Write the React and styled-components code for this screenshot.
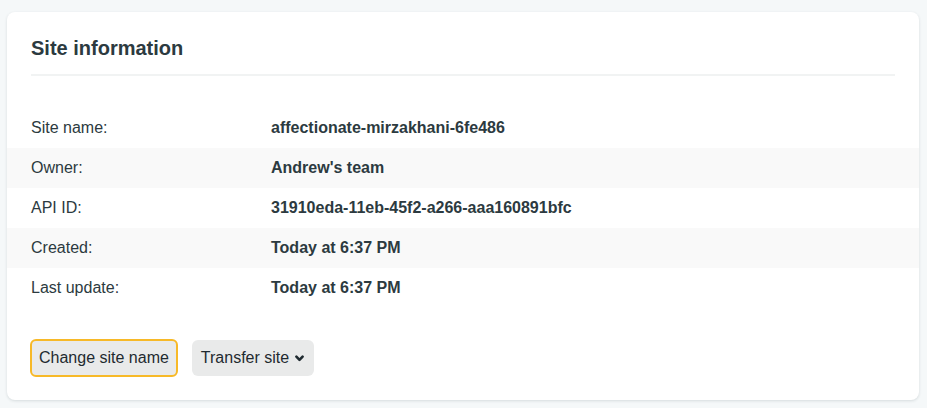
import React from 'react'
import styled, { createGlobalStyle } from 'styled-components'

const GlobalStyle = createGlobalStyle`
    body {
        margin: 0;
        padding: 12px 8px 8px 7px;
        background: #f5f8f9;
        font-family: "Liberation Sans", Arial, sans-serif;
        color: #2c3a40;
    }
`

const rows = [
    { label: 'Site name:', value: 'affectionate-mirzakhani-6fe486' },
    { label: 'Owner:', value: "Andrew's team" },
    { label: 'API ID:', value: '31910eda-11eb-45f2-a266-aaa160891bfc' },
    { label: 'Created:', value: 'Today at 6:37 PM' },
    { label: 'Last update:', value: 'Today at 6:37 PM' },
]

const App = () => {
    return (
        <>
            <GlobalStyle />
            <Card>
                <Header>
                    <Title>Site information</Title>
                </Header>
                <InfoList>
                    {rows.map((row, i) => (
                        <Row key={row.label} striped={i % 2 === 1}>
                            <Label>{row.label}</Label>
                            <Value>{row.value}</Value>
                        </Row>
                    ))}
                </InfoList>
                <Actions>
                    <Button focused>Change site name</Button>
                    <Button>
                        Transfer site
                        <svg width="9" height="7" viewBox="0 0 9 7">
                            <path d="M1.4 1.6 L4.5 4.8 L7.6 1.6" fill="none" stroke="#1f2a30" strokeWidth="2.6" strokeLinecap="round" strokeLinejoin="round" />
                        </svg>
                    </Button>
                </Actions>
            </Card>
        </>
    )
}

export default App

const Card = styled.div`
    background: #ffffff;
    border-radius: 8px;
    box-shadow: 0 1px 3px rgba(30, 50, 60, 0.14);
    padding: 24px 0 23px;
`

const Header = styled.div`
    margin: 0 24px;
    padding-bottom: 14px;
    border-bottom: 2px solid #f1f3f3;
`

const Title = styled.h2`
    margin: 0;
    font-size: 20px;
    line-height: 24px;
    font-weight: 700;
    color: #2c3a40;
`

const InfoList = styled.div`
    margin-top: 32px;
    display: flex;
    flex-direction: column;
`

const Row = styled.div.withConfig({ shouldForwardProp: p => p !== 'striped' })`
    display: grid;
    grid-template-columns: 240px 1fr;
    align-items: center;
    height: 40px;
    padding: 0 24px;
    background: ${props => props.striped ? '#f9f9f9' : 'transparent'};
    font-size: 16px;
`

const Label = styled.span`
    color: #2c3a40;
`

const Value = styled.span`
    font-weight: 700;
    color: #2c3a40;
`

const Actions = styled.div`
    display: flex;
    align-items: center;
    gap: 14px;
    margin-top: 31px;
    padding: 0 23px;
`

const Button = styled.button.withConfig({ shouldForwardProp: p => p !== 'focused' })`
    display: inline-flex;
    align-items: center;
    gap: 6px;
    height: ${props => props.focused ? '38px' : '36px'};
    padding: ${props => props.focused ? '0 7px' : '0 10px 0 9px'};
    border: ${props => props.focused ? '2px solid #f7b928' : 'none'};
    border-radius: 6px;
    background: #e9eaea;
    font-family: "Liberation Sans", Arial, sans-serif;
    font-size: 16px;
    color: #1f2a30;
    cursor: pointer;
`
